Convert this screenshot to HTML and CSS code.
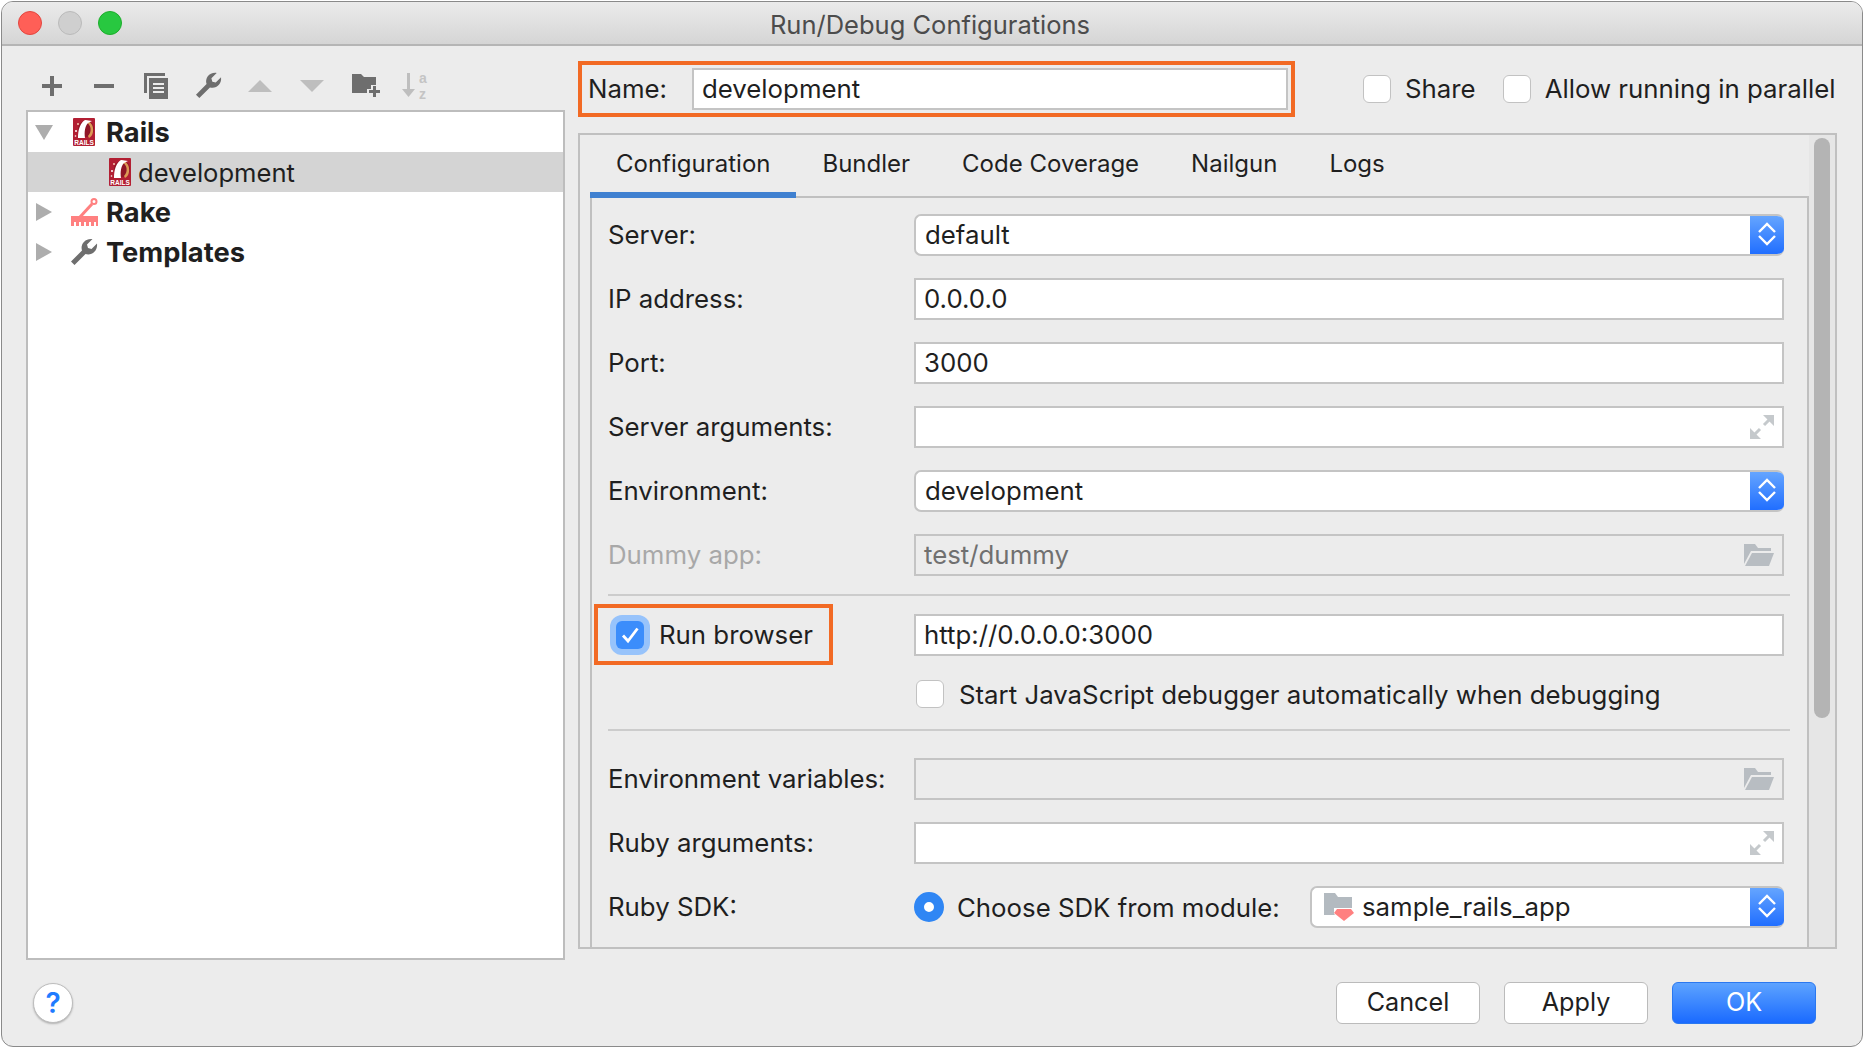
FILE: index.html
```html
<!DOCTYPE html>
<html lang="en">
<head>
  <meta charset="UTF-8">
  <title>Run/Debug Configurations</title>
  <link rel="stylesheet" href="styles.css">
</head>
<body>
  <!-- shared icons -->
  <svg class="sprites" xmlns="http://www.w3.org/2000/svg">
    <symbol id="i-rails" viewBox="0 0 22 28">
      <rect width="22" height="28" rx="1" fill="#b21f33"/>
      <circle cx="13" cy="11" r="8" fill="#8f1626"/>
      <path d="M12 2 C18 3 21 8 20 14 C19.600 17 18 19 16 20 L15 18 C17 16 18 13 17.500 10 C17 7 15 5 12 4 Z" fill="#dc9a55"/>
      <path d="M5 20 C5 12 7 5 12 2 L19 3 L15 5 C12 8 11 14 12 20 Z" fill="#fff"/>
      <circle cx="3" cy="13" r="1" fill="#fff"/>
      <circle cx="5" cy="6" r="1" fill="#f3c9b0"/>
      <circle cx="2.500" cy="18" r="0.800" fill="#fff"/>
      <text class="rails-label" x="11" y="26.500" text-anchor="middle">RAILS</text>
    </symbol>
    <symbol id="i-wrench" viewBox="0 0 28 28">
      <path d="M1 23.500 L12 12.500 C10 6.500 15 0 22.500 1 L17 6.500 L18 10 L21.500 11 L27 5.500 C28 13 21.500 18 15.500 16 L4.500 27 Z"/>
    </symbol>
    <symbol id="i-folder-open" viewBox="0 0 30 22">
      <path d="M0 0 H11 L14 4 H27 V7 H7 L0 20 Z"/>
      <path d="M8 9 H30 L25 22 H1 Z"/>
    </symbol>
    <symbol id="i-expand" viewBox="0 0 24 24">
      <path d="M13 0 H24 V11 Z M0 24 V13 L11 24 Z"/>
      <path d="M19 5 L14 10 M5 19 L10 14" stroke="currentColor" stroke-width="3" fill="none"/>
    </symbol>
    <symbol id="i-updown" viewBox="0 0 20 26">
      <path d="M2 11 L10 3 L18 11 M2 15 L10 23 L18 15" fill="none" stroke="#fff" stroke-width="2.400"/>
    </symbol>
  </svg>

  <div class="window">
    <div class="titlebar">
      <div class="lights">
        <span class="light red"></span>
        <span class="light grey"></span>
        <span class="light green"></span>
      </div>
      <div class="title">Run/Debug Configurations</div>
      <div></div>
    </div>

    <div class="main">
      <div class="left">
        <div class="toolbar">
          <svg class="tool" width="20" height="20" viewBox="0 0 20 20"><path d="M8 0h4v8h8v4h-8v8H8v-8H0V8h8z"/></svg>
          <svg class="tool tool-minus" width="20" height="4" viewBox="0 0 20 4"><rect width="20" height="4"/></svg>
          <svg class="tool tool-copy" width="24" height="26" viewBox="0 0 24 26">
            <path d="M0 0h21v3H3v17H0z"/>
            <path fill-rule="evenodd" d="M5 5h19v21H5z M9 10v2h11v-2z M9 14v2h11v-2z M9 18v2h11v-2z"/>
          </svg>
          <svg class="tool tool-wrench" width="27" height="27"><use href="#i-wrench"/></svg>
          <svg class="tool off tool-up" width="24" height="12" viewBox="0 0 24 12"><path d="M12 0l12 12H0z"/></svg>
          <svg class="tool off tool-down" width="24" height="12" viewBox="0 0 24 12"><path d="M0 0h24L12 12z"/></svg>
          <svg class="tool tool-folder" width="28" height="23" viewBox="0 0 28 23">
            <path d="M0 0h9l3 3h12v8h-5v4h-4v4H0z"/>
            <path d="M21 12h3v4h4v3h-4v4h-3v-4h-4v-3h4z"/>
          </svg>
          <svg class="tool off tool-sort" width="26" height="32" viewBox="0 0 26 32">
            <path d="M5 3h3v16h5l-6.500 8L0 19h5z"/>
            <text class="sort-letter" x="17" y="13">a</text>
            <text class="sort-letter" x="17" y="28.500">z</text>
          </svg>
        </div>

        <div class="tree">
          <div class="tree-row">
            <span class="arrow arrow-down"></span>
            <span class="tree-icon"><svg width="22" height="28"><use href="#i-rails"/></svg></span>
            <span class="tree-label">Rails</span>
          </div>
          <div class="tree-row child selected">
            <svg width="22" height="28"><use href="#i-rails"/></svg>
            <span>development</span>
          </div>
          <div class="tree-row">
            <span class="arrow arrow-right"></span>
            <span class="tree-icon">
              <svg width="27" height="28" viewBox="0 0 27 28">
                <path d="M9 19 L21 6" stroke="#ff8080" stroke-width="3" fill="none"/>
                <circle cx="23" cy="3.500" r="2.500" fill="none" stroke="#ff8080" stroke-width="2"/>
                <path d="M0 18h27v10h-2v-4h-2v4h-3v-4h-2v4h-3v-4h-2v4h-3v-4H8v4H5v-4H3v4H0z" fill="#ff8080"/>
              </svg>
            </span>
            <span class="tree-label">Rake</span>
          </div>
          <div class="tree-row">
            <span class="arrow arrow-right"></span>
            <span class="tree-icon"><svg class="tool" width="28" height="28"><use href="#i-wrench"/></svg></span>
            <span class="tree-label">Templates</span>
          </div>
        </div>
      </div>

      <div class="right">
        <div class="name-row">
          <div class="name-box">
            <span class="raised">Name:</span>
            <div class="field name-field">development</div>
          </div>
          <div class="check-row share">
            <span class="checkbox"></span>
            <span class="raised">Share</span>
          </div>
          <div class="check-row parallel">
            <span class="checkbox"></span>
            <span class="raised">Allow running in parallel</span>
          </div>
        </div>

        <div class="panel">
          <div class="tabbed">
            <div class="tabs">
              <div class="tab active">Configuration</div>
              <div class="tab">Bundler</div>
              <div class="tab">Code Coverage</div>
              <div class="tab">Nailgun</div>
              <div class="tab">Logs</div>
            </div>

            <div class="config">
              <div class="form">
                <label>Server:</label>
                <div class="field select">
                  <span class="select-text">default</span>
                  <span class="select-btn"><svg width="20" height="26"><use href="#i-updown"/></svg></span>
                </div>

                <label>IP address:</label>
                <div class="field">0.0.0.0</div>

                <label>Port:</label>
                <div class="field">3000</div>

                <label>Server arguments:</label>
                <div class="field">
                  <svg class="field-icon expand"><use href="#i-expand"/></svg>
                </div>

                <label>Environment:</label>
                <div class="field select">
                  <span class="select-text">development</span>
                  <span class="select-btn"><svg width="20" height="26"><use href="#i-updown"/></svg></span>
                </div>

                <label class="dim">Dummy app:</label>
                <div class="field disabled">
                  test/dummy
                  <svg class="field-icon folder"><use href="#i-folder-open"/></svg>
                </div>
              </div>

              <hr class="sep">

              <div class="form">
                <div class="run-box">
                  <span class="checkbox checked">
                    <svg width="20" height="18" viewBox="0 0 20 18"><path d="M3 9.500 L8 15 L17.500 2.500" fill="none" stroke="#fff" stroke-width="2.800"/></svg>
                  </span>
                  <span>Run browser</span>
                </div>
                <div class="field">http://0.0.0.0:3000</div>

                <div></div>
                <div class="check-row debugger">
                  <span class="checkbox"></span>
                  <span>Start JavaScript debugger automatically when debugging</span>
                </div>
              </div>

              <hr class="sep sep-lower">

              <div class="form">
                <label>Environment variables:</label>
                <div class="field disabled">
                  <svg class="field-icon folder"><use href="#i-folder-open"/></svg>
                </div>

                <label>Ruby arguments:</label>
                <div class="field">
                  <svg class="field-icon expand"><use href="#i-expand"/></svg>
                </div>

                <label>Ruby SDK:</label>
                <div class="sdk-row">
                  <span class="radio"></span>
                  <span class="sdk-text">Choose SDK from module:</span>
                  <div class="field select sdk-select">
                    <svg class="module-icon" width="30" height="28" viewBox="0 0 30 28">
                      <path d="M0 0h11l3 4h14v18H0z" fill="#b3bac0"/>
                      <path d="M10 15h20v6l-10 7-10-7z" fill="#fff"/>
                      <path d="M13 16h14l3 4-10 8-10-8z" fill="#ff8080"/>
                    </svg>
                    <span class="select-text">sample_rails_app</span>
                    <span class="select-btn"><svg width="20" height="26"><use href="#i-updown"/></svg></span>
                  </div>
                </div>
              </div>
            </div>
          </div>

          <div class="scroll-track"><div class="scroll-thumb"></div></div>
        </div>
      </div>
    </div>

    <div class="footer">
      <div class="help">?</div>
      <div class="buttons">
        <div class="btn">Cancel</div>
        <div class="btn">Apply</div>
        <div class="btn primary">OK</div>
      </div>
    </div>
  </div>
</body>
</html>
```

FILE: styles.css
```css
/* Run/Debug dialog, macOS look */
* {
  box-sizing: border-box;
}

body {
  margin: 0;
  padding: 1px;
  background-color: #fff;
  color: #1f1f1f;
  font-family: Inter, "Noto Sans", sans-serif;
  font-size: 25.800px;
  overflow: hidden;
}

.sprites {
  display: none;
}

.window {
  width: 1862px;
  height: 1046px;
  background-color: #ececec;
  border: 1px solid #8a8a8a;
  border-radius: 12px;
  overflow: hidden;
  display: flex;
  flex-direction: column;
}

/* Title bar */
.titlebar {
  height: 44px;
  flex: none;
  display: grid;
  grid-template-columns: 1fr auto 1fr;
  align-items: center;
  padding-left: 16px;
  padding-right: 20px;
  background: linear-gradient(#ebebeb, #d5d5d5);
  border-bottom: 2px solid #b5b5b5;
}

.lights {
  display: flex;
  gap: 16px;
}

.light {
  width: 24px;
  height: 24px;
  border-radius: 50%;
  border: 1px solid;
}

.light.red {
  background-color: #ff5f57;
  border-color: #e2463f;
}

.light.grey {
  background-color: #cfcfcf;
  border-color: #bababa;
}

.light.green {
  background-color: #28c840;
  border-color: #1dad2b;
}

.title {
  padding-top: 3px;
  color: #4c4c4c;
  font-size: 25.500px;
  white-space: nowrap;
}

/* Main area */
.main {
  height: 914px;
  flex: none;
  display: flex;
}

.left {
  width: 576px;
  flex: none;
  padding-left: 24px;
}

.toolbar {
  height: 64px;
  padding: 15px 0 0 16px;
  display: flex;
  align-items: center;
}

.tool {
  fill: #6e6e6e;
  flex: none;
}

.tool.off {
  fill: #bebebe;
}

.tool-minus { margin-left: 32px; }
.tool-copy { margin-left: 30px; }
.tool-wrench { margin-left: 27px; }
.tool-up { margin-left: 26px; }
.tool-down { margin-left: 28px; }
.tool-folder { margin-left: 28px; }
.tool-sort { margin-left: 22px; }

.sort-letter {
  font-family: "Liberation Sans", sans-serif;
  font-size: 14px;
  font-weight: 700;
  fill: #c4c4c4;
}

.tree {
  width: 539px;
  height: 850px;
  background-color: #fff;
  border: 2px solid #bdbdbd;
}

.tree-row {
  height: 40px;
  display: flex;
  align-items: center;
}

.tree-row.child {
  padding-left: 81px;
  gap: 7px;
  font-size: 25.600px;
}

.tree-row.selected {
  background-color: #d4d4d4;
}

.arrow {
  width: 0;
  height: 0;
  margin-left: 7px;
  flex: none;
  border-style: solid;
  border-color: transparent;
}

.arrow-down {
  border-width: 15px 9px 0;
  border-top-color: #adadad;
}

.arrow-right {
  margin-left: 8px;
  margin-right: 1px;
  border-width: 9px 0 9px 16px;
  border-left-color: #adadad;
}

.tree-icon {
  width: 28px;
  margin-left: 17px;
  display: flex;
  justify-content: center;
}

.tree-label {
  margin-left: 8px;
  font-size: 27.300px;
  font-weight: 700;
}

.rails-label {
  font-family: "Liberation Sans", sans-serif;
  font-size: 6.500px;
  font-weight: 700;
  fill: #fff;
}

/* Right side */
.right {
  width: 1259px;
  flex: none;
  padding-top: 15px;
}

.name-row {
  display: flex;
  align-items: center;
}

.raised {
  margin-bottom: 2px;
}

.name-box {
  width: 717px;
  height: 56px;
  padding: 0 3px 0 6px;
  display: flex;
  align-items: center;
  justify-content: space-between;
  border: 4px solid #f26a24;
}

.field {
  height: 42px;
  display: flex;
  align-items: center;
  justify-content: space-between;
  padding: 0 0 2px 8px;
  background-color: #fff;
  border: 2px solid #c4c4c4;
  white-space: nowrap;
}

.name-field {
  width: 596px;
}

.check-row {
  height: 28px;
  display: flex;
  align-items: center;
  gap: 14px;
  white-space: nowrap;
}

.share {
  margin-left: 68px;
}

.parallel {
  margin-left: 27px;
}

.checkbox {
  width: 28px;
  height: 28px;
  flex: none;
  background-color: #fff;
  border: 1px solid #c2c2c2;
  border-radius: 6px;
}

.checkbox.checked {
  display: flex;
  align-items: center;
  justify-content: center;
  background-color: #3b8dfb;
  border: none;
  box-shadow: 0 0 0 6px #97c3fb;
}

.panel {
  height: 816px;
  margin-top: 16px;
  display: flex;
  border: 2px solid #c0c0c0;
  overflow: hidden;
}

.tabbed {
  width: 1229px;
  flex: none;
  padding-left: 10px;
}

.tabs {
  height: 63px;
  display: flex;
  position: relative;
  z-index: 1;
  font-size: 24px;
}

.tab {
  display: flex;
  align-items: center;
  padding: 0 26px;
  height: 57px;
}

.tab.active {
  height: 63px;
  border-bottom: 6px solid #3f80d0;
}

.config {
  height: 800px;
  margin-top: -2px;
  padding: 16px 23px 0 16px;
  border: 2px solid #c0c0c0;
  border-bottom: none;
}

.form {
  display: grid;
  grid-template-columns: 306px 1fr;
  row-gap: 22px;
  align-items: center;
}

.form label {
  padding-bottom: 2px;
}

.dim {
  color: #a8a8a8;
}

.sep {
  height: 2px;
  margin: 18px -6px 18px 0;
  border: none;
  background-color: #cccccc;
}

.sep-lower {
  margin-top: 21px;
  margin-bottom: 27px;
}

.field.disabled {
  background-color: #ececec;
  color: #707070;
}

.field.select {
  padding-right: 0;
  border-radius: 7px;
  border-right: none;
  overflow: hidden;
}

.select-text {
  padding-left: 1px;
}

.select-btn {
  width: 34px;
  height: 42px;
  margin: 0;
  display: flex;
  align-items: center;
  justify-content: center;
  background: linear-gradient(#6aa9ff, #1f6dff);
}

.field-icon {
  margin-left: auto;
  margin-right: 8px;
}

.field-icon.expand {
  width: 24px;
  height: 24px;
  margin-top: 2px;
  fill: #c5c9cc;
  color: #c5c9cc;
}

.field-icon.folder {
  width: 30px;
  height: 22px;
  margin-top: 2px;
  fill: #b8bdc2;
}

.run-box {
  width: 239px;
  height: 61px;
  margin: -10px 0 -9px -14px;
  padding-left: 18px;
  display: flex;
  align-items: center;
  gap: 15px;
  border: 4px solid #f26a24;
  white-space: nowrap;
}

.debugger {
  margin-top: 2px;
  margin-left: 2px;
  gap: 15px;
}

.sdk-row {
  display: flex;
  align-items: center;
}

.radio {
  width: 30px;
  height: 30px;
  flex: none;
  border-radius: 50%;
  border: 10px solid #2f86f4;
  background-color: #fff;
}

.sdk-text {
  margin-left: 13px;
  white-space: nowrap;
}

.sdk-select {
  width: 474px;
  margin-left: auto;
  padding-left: 12px;
}

.module-icon {
  flex: none;
  margin-top: 2px;
}

.sdk-select .select-text {
  margin-left: 7px;
  margin-right: auto;
}

.scroll-track {
  width: 26px;
  flex: none;
  padding: 3px 5px 0;
  background-color: #e6e6e6;
}

.scroll-thumb {
  width: 16px;
  height: 580px;
  border-radius: 8px;
  background-color: #b4b4b4;
}

/* Bottom buttons */
.footer {
  flex: 1;
  display: flex;
  align-items: flex-start;
  justify-content: space-between;
  padding: 22px 46px 0 31px;
}

.help {
  width: 40px;
  height: 40px;
  margin-top: 1px;
  display: flex;
  align-items: center;
  justify-content: center;
  background-color: #fff;
  color: #1f7cff;
  font-size: 28px;
  font-weight: 600;
  border: 1px solid #bdbdbd;
  border-radius: 50%;
  box-shadow: 0 1px 2px rgba(0, 0, 0, 0.25);
}

.buttons {
  display: flex;
  gap: 24px;
}

.btn {
  width: 144px;
  height: 42px;
  padding-bottom: 2px;
  display: flex;
  align-items: center;
  justify-content: center;
  background-color: #fff;
  border: 1px solid #bbbbbb;
  border-radius: 6px;
  font-size: 25.200px;
}

.btn.primary {
  background: linear-gradient(#5da3ff, #1a6aff);
  border-color: #2a78f0;
  color: #fff;
}
```
